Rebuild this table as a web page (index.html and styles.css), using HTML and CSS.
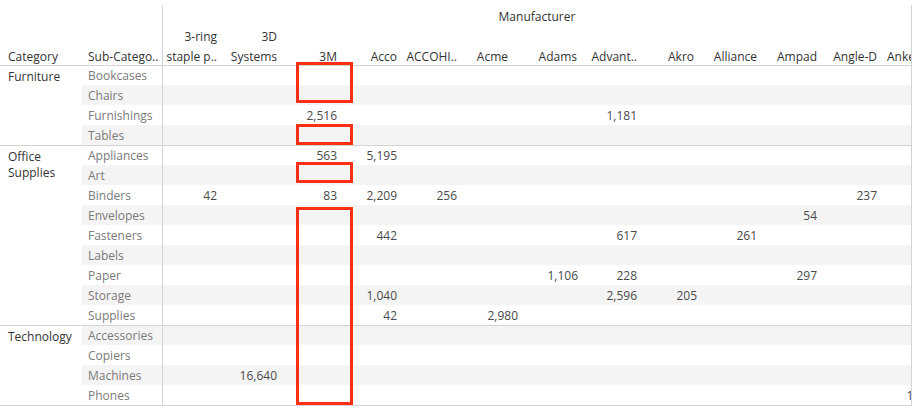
FILE: index.html
```html
<!DOCTYPE html>
<html lang="en">
<head>
<meta charset="utf-8">
<title>Manufacturer by Sub-Category</title>
<link rel="stylesheet" href="styles.css">
</head>
<body>
<div class="sheet">
  <header class="head">
    <div class="hcat">Category</div>
    <div class="hsub">Sub-Catego..</div>
    <div class="hvals">
      <div class="mf">Manufacturer</div>
      <div class="labels">
        <div class="lb">3-ring<br>staple p..</div>
        <div class="lb">3D<br>Systems</div>
        <div class="lb">3M</div>
        <div class="lb">Acco</div>
        <div class="lb">ACCOHI..</div>
        <div class="lb acme">Acme</div>
        <div class="lb">Adams</div>
        <div class="lb">Advant..</div>
        <div class="lb akro">Akro</div>
        <div class="lb">Alliance</div>
        <div class="lb">Ampad</div>
        <div class="lb">Angle-D</div>
        <div class="lb anker">Anker</div>
      </div>
    </div>
  </header>

  <section class="group">
    <div class="cat">Furniture</div>
    <div class="rows">
      <div class="row"><div class="sub">Bookcases</div><div class="vals"></div></div>
      <div class="row alt"><div class="sub">Chairs</div><div class="vals"></div></div>
      <div class="row"><div class="sub">Furnishings</div><div class="vals"><span class="m2">2,516</span><span class="m7">1,181</span></div></div>
      <div class="row alt"><div class="sub">Tables</div><div class="vals"></div></div>
    </div>
  </section>

  <section class="group">
    <div class="cat">Office<br>Supplies</div>
    <div class="rows">
      <div class="row"><div class="sub">Appliances</div><div class="vals"><span class="m2">563</span><span class="m3">5,195</span></div></div>
      <div class="row alt"><div class="sub">Art</div><div class="vals"></div></div>
      <div class="row"><div class="sub">Binders</div><div class="vals"><span class="m0">42</span><span class="m2">83</span><span class="m3">2,209</span><span class="m4">256</span><span class="m11">237</span></div></div>
      <div class="row alt"><div class="sub">Envelopes</div><div class="vals"><span class="m10">54</span></div></div>
      <div class="row"><div class="sub">Fasteners</div><div class="vals"><span class="m3">442</span><span class="m7">617</span><span class="m9">261</span></div></div>
      <div class="row alt"><div class="sub">Labels</div><div class="vals"></div></div>
      <div class="row"><div class="sub">Paper</div><div class="vals"><span class="m6">1,106</span><span class="m7">228</span><span class="m10">297</span></div></div>
      <div class="row alt"><div class="sub">Storage</div><div class="vals"><span class="m3">1,040</span><span class="m7">2,596</span><span class="m8">205</span></div></div>
      <div class="row"><div class="sub">Supplies</div><div class="vals"><span class="m3">42</span><span class="m5">2,980</span></div></div>
    </div>
  </section>

  <section class="group last">
    <div class="cat">Technology</div>
    <div class="rows">
      <div class="row alt"><div class="sub">Accessories</div><div class="vals"></div></div>
      <div class="row"><div class="sub">Copiers</div><div class="vals"></div></div>
      <div class="row alt"><div class="sub">Machines</div><div class="vals"><span class="m1">16,640</span></div></div>
      <div class="row"><div class="sub">Phones</div><div class="vals"><span class="m12">1,049</span></div></div>
    </div>
  </section>

  <div class="mark mark-a"></div>
  <div class="mark mark-b"></div>
  <div class="mark mark-c"></div>
  <div class="mark mark-d"></div>
</div>
</body>
</html>
```
FILE: styles.css
```css
* { box-sizing: border-box; }
html, body { margin: 0; padding: 0; background: #fff; }
body {
  font-family: "Open Sans", "Noto Sans", sans-serif;
  font-size: 12px;
  color: #333;
}
.sheet {
  position: relative;
  width: 912px;
  overflow: hidden;
}

/* header */
.head { display: flex; height: 65px; }
.hcat, .hsub {
  display: flex;
  align-items: flex-end;
  height: 67px;
  line-height: 20px;
  color: #333;
  white-space: nowrap;
}
.hcat { width: 82px; padding-left: 8px; }
.hsub { width: 80px; padding-left: 6px; }
.hvals {
  width: 750px;
  height: 62px;
  margin-top: 5px;
  border-left: 1px solid #d4d4d4;
  border-right: 1px solid #d4d4d4;
  display: flex;
  flex-direction: column;
  overflow: hidden;
}
.mf {
  height: 21px;
  line-height: 23px;
  text-align: center;
  color: #333;
}
.labels {
  flex: 1;
  display: grid;
  grid-template-columns: repeat(13, 60px);
  align-items: end;
}
.lb {
  text-align: right;
  padding-right: 6px;
  line-height: 20px;
  white-space: nowrap;
  color: #333;
}
.lb.acme { padding-right: 15px; }
.lb.akro { padding-right: 9px; }
.lb.anker { text-align: left; padding-left: 4px; padding-right: 0; }

/* body */
.group {
  display: flex;
  border-top: 1px solid #d4d4d4;
}
.group.last { border-bottom: 1px solid #d4d4d4; }
.cat {
  width: 82px;
  padding: 3px 0 0 8px;
  line-height: 16px;
  color: #333;
}
.rows { display: flex; flex-direction: column; }
.row {
  display: flex;
  height: 20px;
}
.sub, .vals {
  padding-top: 1px;
  line-height: 19px;
}
.row:first-child { height: 19px; }
.row:first-child .sub, .row:first-child .vals { line-height: 18px; }
.row.alt .sub, .row.alt .vals { background: #f4f4f4; }
.sub {
  width: 80px;
  padding-left: 6px;
  color: #7a7a7a;
  white-space: nowrap;
}
.vals {
  width: 750px;
  border-left: 1px solid #d4d4d4;
  border-right: 1px solid #d4d4d4;
  display: grid;
  grid-template-columns: repeat(13, 60px);
  overflow: hidden;
  color: #4a4a4a;
}
.vals span { text-align: right; padding-right: 6px; white-space: nowrap; grid-row: 1; }
.m0 { grid-column: 1; }
.m1 { grid-column: 2; }
.m2 { grid-column: 3; }
.m3 { grid-column: 4; }
.m4 { grid-column: 5; }
.vals .m5 { grid-column: 6; padding-right: 5px; }
.vals .m6 { grid-column: 7; padding-right: 5px; }
.m7 { grid-column: 8; }
.m8 { grid-column: 9; }
.m9 { grid-column: 10; }
.m10 { grid-column: 11; }
.m11 { grid-column: 12; }
.m12 { grid-column: 13; }

/* red annotation boxes drawn over the table */
.mark {
  position: absolute;
  left: 296px;
  width: 57px;
  border: 3px solid #ff2f14;
  pointer-events: none;
}
.mark-a { top: 62px; height: 41px; }
.mark-b { top: 124px; height: 21px; }
.mark-c { top: 162px; height: 21px; }
.mark-d { top: 207px; height: 198px; }
```
